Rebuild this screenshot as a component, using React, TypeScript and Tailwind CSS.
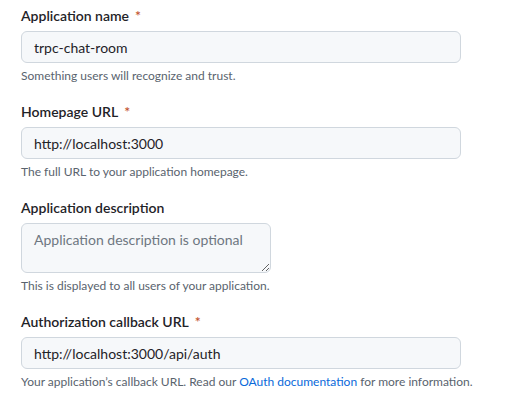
const fieldInput =
  'block w-[440px] h-[32px] px-3 text-[14px] text-[#1f2328] bg-[#f6f8fa] border border-[#d0d7de] rounded-md outline-none';

type FieldProps = {
  label: string;
  required?: boolean;
  children: React.ReactNode;
  note: React.ReactNode;
};

const Field = ({ label, required, children, note }: FieldProps) => (
  <div className="mb-4">
    <label className="block text-[14px] leading-[21px] font-semibold text-[#1f2328] mb-[5px]">
      {label}
      {required && <span className="text-[#c2532f] ml-[6px]">*</span>}
    </label>
    {children}
    <p className="mt-1 text-[12px] leading-[18px] text-[#59636e]">{note}</p>
  </div>
);

const App = () => {
  return (
    <div
      className="w-[508px] h-[406px] bg-white pl-[21px] pt-[5px] overflow-hidden"
      style={{ fontFamily: '"Segoe UI", Lato, "Noto Sans", sans-serif' }}
    >
      <Field label="Application name" required note="Something users will recognize and trust.">
        <input className={fieldInput} defaultValue="trpc-chat-room" />
      </Field>

      <Field label="Homepage URL" required note="The full URL to your application homepage.">
        <input className={fieldInput} defaultValue="http://localhost:3000" />
      </Field>

      <Field label="Application description" note="This is displayed to all users of your application.">
        <textarea
          className="block w-[250px] h-[50px] px-3 py-[5px] text-[14px] text-[#1f2328] bg-[#f6f8fa] border border-[#d0d7de] rounded-md outline-none placeholder:text-[#6e7781]"
          placeholder="Application description is optional"
        />
      </Field>

      <Field
        label="Authorization callback URL"
        required
        note={
          <>
            Your application’s callback URL. Read our{' '}
            <a className="text-[#0969da]" href="#">
              OAuth documentation
            </a>{' '}
            for more information.
          </>
        }
      >
        <input className={fieldInput} defaultValue="http://localhost:3000/api/auth" />
      </Field>
    </div>
  );
};

export default App;
